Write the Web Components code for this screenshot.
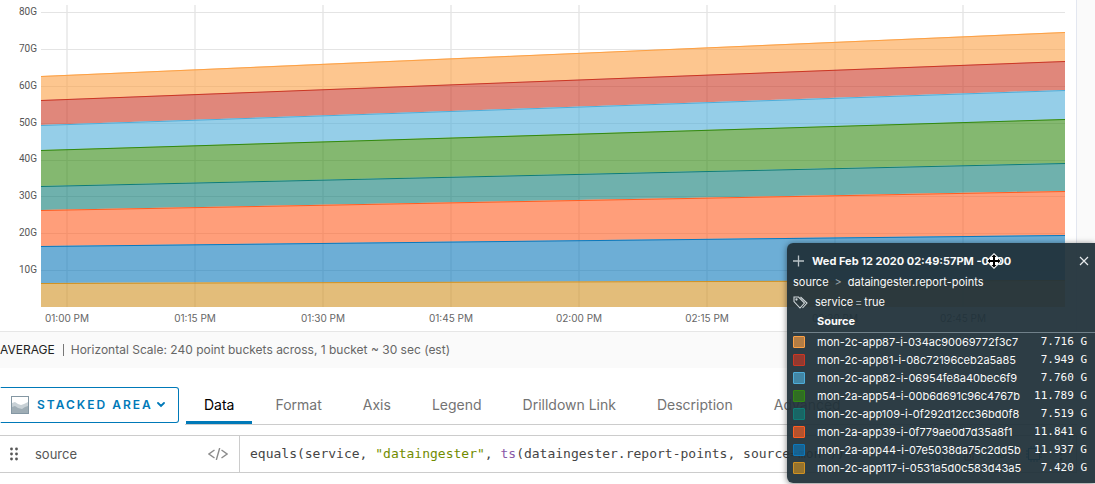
<!DOCTYPE html>
<html lang="en">
<head>
<meta charset="utf-8">
<title>Report points chart</title>
<style>
  body { margin: 0; background: #fff; overflow: hidden; font-family: Inter, "Open Sans", sans-serif; color: #565656; }
</style>
</head>
<body>
<chart-editor></chart-editor>

<template id="t-editor">
  <style>
    :host { display: block; position: relative; padding-bottom: 11px; }
    .top { background: #fafafa; padding-right: 18px; }
    .controls { display: flex; align-items: flex-start; margin: 18px 18px 0 0; }
    hover-legend { position: absolute; top: 243px; right: 0; }
  </style>
  <div class="top"><area-chart></area-chart></div>
  <scale-note><b slot="mode">AVERAGE</b>Horizontal Scale: 240 point buckets across, 1 bucket ~ 30 sec (est)</scale-note>
  <div class="controls">
    <chart-type>STACKED AREA</chart-type>
    <tab-bar></tab-bar>
  </div>
  <query-row></query-row>
  <hover-legend></hover-legend>
</template>

<template id="t-chart">
  <style>
    :host { display: block; background: #fff; border-right: 1px solid #e3e7f0; border-bottom: 1px solid #e6e6e6; }
    .plot { display: grid; grid-template-columns: 41px 1fr; padding-right: 11px; }
    .y { display: flex; flex-direction: column; justify-content: space-between; align-items: flex-end;
         padding: 6px 4px 31px 0; font: 10px/12px Roboto, sans-serif; color: #555; }
    svg { display: block; width: 100%; height: 302px; margin-top: 5px; }
    .x { display: grid; grid-template-columns: repeat(8, 1fr); margin: 0 49px 0 3px; padding: 5px 0 6px;
         font-size: 10px; line-height: 13px; color: #666; text-align: center; }
  </style>
  <div class="plot"><div class="y"></div>
    <svg viewBox="0 0 1024 302" preserveAspectRatio="none" role="img" aria-label="Stacked area chart"></svg></div>
  <div class="x"></div>
</template>

<template id="t-note">
  <style>
    :host { display: flex; align-items: center; height: 36px; background: #fafafa; font-size: 12px; line-height: 16px; color: #666; }
    ::slotted(b) { font-weight: 400; color: #222; }
    i { width: 1px; height: 12px; background: #777; margin: 0 7px 0 8px; }
  </style>
  <slot name="mode"></slot><i></i><span><slot></slot></span>
</template>

<template id="t-type">
  <style>
    :host { display: block; flex: none; }
    button { display: flex; align-items: center; box-sizing: border-box; width: 179px; height: 36px; margin: 1px 0 0;
      padding: 0 13px 0 10px; border: 1px solid #0079b8; border-left-color: #fff; border-radius: 0 3px 3px 0; background: #fff;
      font: 600 12px/16px Inter, sans-serif; letter-spacing: 2px; color: #0079b8; white-space: nowrap; }
    .area { margin-right: 8px; flex: none; }
    .caret { margin-left: auto; flex: none; }
  </style>
  <button type="button" aria-haspopup="listbox">
    <svg class="area" width="18" height="18" viewBox="0 0 18 18"><rect x=".5" y=".5" width="17" height="17" fill="#fff" stroke="#8497a3"/><path d="M1 7l3-1 3 2 3 1 3-1 2-1 2-1v8H1z" fill="#c8d1d6"/><path d="M1 11l3-1 3 2 4 1 3-2 3-1v7H1z" fill="#9fadb5"/></svg>
    <slot></slot>
    <svg class="caret" width="8" height="6" viewBox="0 0 8 6"><path d="M1 1l3 3 3-3" fill="none" stroke="#0079b8" stroke-width="1.8" stroke-linecap="round"/></svg>
  </button>
</template>

<template id="t-tabs">
  <style>
    :host { display: block; flex: 1; margin-left: 6px; min-width: 0; }
    div { display: flex; gap: 5px; box-sizing: border-box; height: 39px; border-bottom: 1px solid #ccc; padding-left: 1px; }
    button { flex: none; box-sizing: border-box; border: 0; border-bottom: 3px solid transparent; background: none; padding: 3px 18px 0;
      font: 14px/18px Inter, sans-serif; color: #737373; }
    button[aria-selected=true] { color: #000; border-bottom-color: #0079b8; }
  </style>
  <div role="tablist"></div>
</template>

<template id="t-query">
  <style>
    :host { display: flex; align-items: stretch; height: 36px; margin: 10px 18px 0 0; border: 1px solid #ccc; border-left: 0; }
    .name { display: flex; align-items: center; box-sizing: border-box; width: 240px; flex: none; padding: 0 11px 0 10px; border-right: 1px solid #ccc; }
    input { flex: 1; min-width: 0; border: 0; padding: 0; margin: 0 0 0 17px; font: 13px/18px Inter, sans-serif; color: #565656; outline: 0; background: none; }
    code { flex: 1; padding-left: 10px; font: 13px/36px "DejaVu Sans Mono", monospace; color: #454545; white-space: pre; min-width: 0; overflow: hidden; }
    .str { color: #718c00; } .fn { color: #8959a8; }
    .tools { flex: none; box-sizing: border-box; width: 159px; border-left: 1px solid #ccc; display: flex; align-items: center; justify-content: space-around; padding: 0 4px; }
  </style>
  <div class="name">
    <svg width="8" height="14" viewBox="0 0 8 14" fill="#565656"><circle cx="1.5" cy="2" r="1.4"/><circle cx="6.5" cy="2" r="1.4"/><circle cx="1.5" cy="7" r="1.4"/><circle cx="6.5" cy="7" r="1.4"/><circle cx="1.5" cy="12" r="1.4"/><circle cx="6.5" cy="12" r="1.4"/></svg>
    <input type="text" value="source" aria-label="Query name">
    <svg width="20" height="12" viewBox="0 0 20 12" fill="none" stroke="#8c8c8c" stroke-width="1.4"><path d="M6.500 2L1 6l5.500 4M13.500 2L19 6l-5.500 4M11.700 0L8.300 12"/></svg>
  </div>
  <code>equals(service, <span class="str">"dataingester"</span>, <span class="fn">ts</span>(dataingester.report-points, source=mon*))</code>
  <div class="tools">
    <svg width="14" height="14" viewBox="0 0 14 14" fill="none" stroke="#0079b8"><path d="M4 3.500h8v10H4zM2 11V1h8"/></svg>
    <svg width="14" height="14" viewBox="0 0 14 14" fill="none" stroke="#c92100"><path d="M1 3.500h12M3 4v9h8V4M5 3V1h4v2M5.500 6v5M8.500 6v5"/></svg>
    <svg width="14" height="14" viewBox="0 0 14 14" fill="none" stroke="#318700"><path d="M1 7q6-7 12 0q-6 7-12 0z"/><circle cx="7" cy="7" r="2"/></svg>
    <svg width="16" height="16" viewBox="0 0 16 16" fill="none" stroke="#0079b8"><rect x="2.500" y="2.500" width="11" height="11"/><path d="M5 0v2M8 0v2M11 0v2M5 14v2M8 14v2M11 14v2M0 5h2M0 8h2M0 11h2M14 5h2M14 8h2M14 11h2"/></svg>
    <svg width="4" height="14" viewBox="0 0 4 14" fill="#565656"><circle cx="2" cy="2" r="1.500"/><circle cx="2" cy="7" r="1.500"/><circle cx="2" cy="12" r="1.500"/></svg>
  </div>
</template>

<template id="t-legend">
  <style>
    :host { display: block; box-sizing: border-box; width: 308px; height: 240px; padding: 8px 0 0 6px; border-radius: 6px 0 0 6px;
      background: rgba(32, 49, 57, .94); box-shadow: 0 1px 6px rgba(0, 0, 0, .5); color: #fafafa; font-size: 11px; line-height: 18px; }
    header { display: flex; align-items: center; height: 20px; margin-bottom: 1px; }
    header svg { display: block; }
    h2 { position: relative; margin: 0 auto 0 8px; font-size: 11px; line-height: 18px; font-weight: 700; white-space: nowrap; }
    .move { position: absolute; right: 9px; top: 1px; }
    .icon { border: 0; background: none; padding: 0; }
    .close { margin-right: 6px; }
    p { display: flex; align-items: center; height: 20px; margin: 0; }
    p span { color: #9aa5ab; }
    .crumb span { margin: 0 6px; }
    .tag svg { margin-right: 7px; }
    .tag span { margin: 0 2px; }
    table { width: 100%; border-collapse: collapse; }
    th { text-align: left; height: 18px; padding: 0 0 2px; line-height: 18px; font-weight: 700; border-bottom: 1px solid #71818a; }
    td { height: 18px; padding: 0; }
    .sw { width: 24px; }
    .sw i { display: block; box-sizing: border-box; width: 12px; height: 12px; border: 1px solid; border-radius: 1px; }
    .v { text-align: right; padding-right: 8px; font: 11px/18px "DejaVu Sans Mono", monospace; white-space: pre; }
  </style>
  <header>
    <button class="icon" type="button" aria-label="Add"><svg width="11" height="12" viewBox="0 0 11 12"><path d="M5.500 .5v11M0 6h11" stroke="#b9c2c7" stroke-width="1.300"/></svg></button>
    <h2>Wed Feb 12 2020 02:49:57PM -0000
      <svg class="move" width="16" height="16" viewBox="0 0 16 16"><path d="M8 0L16 8 8 16 0 8z" fill="#fff"/><path d="M8 1.500l2.500 2.500H9v3h3V5.500L14.500 8 12 10.500V9H9v3h1.500L8 14.500 5.500 12H7V9H4v1.500L1.500 8 4 5.500V7h3V4H5.500z" fill="#000"/></svg></h2>
    <button class="icon close" type="button" aria-label="Close"><svg width="10" height="10" viewBox="0 0 10 10"><path d="M1 1l8 8M9 1L1 9" stroke="#e6eaec" stroke-width="1.200"/></svg></button>
  </header>
  <p class="crumb">source<span>&gt;</span>dataingester.report-points</p>
  <p class="tag"><svg width="15" height="13" viewBox="0 0 15 13" fill="none" stroke="#cfd6d9" stroke-width="1.100"><path d="M1 1h4.500l6 6-4.500 5L1 5.500zM7.500 1L14 7l-4.500 5"/><circle cx="3.500" cy="3.500" r=".6"/></svg>service<span>=</span>true</p>
  <table><thead><tr><th></th><th colspan="2" scope="col">Source</th></tr></thead><tbody></tbody></table>
</template>

<script>
  // Top-down series: colour, legend name, latest value, top edge at the left and right of the plot.
  const SERIES = [
    ['#fca044', 'mon-2c-app87-i-034ac90069772f3c7', '7.716', 71, 27],
    ['#cb3723', 'mon-2c-app81-i-08c72196ceb2a5a85', '7.949', 95, 56],
    ['#4eadd9', 'mon-2c-app82-i-06954fe8a40bec6f9', '7.760', 120, 85],
    ['#328911', 'mon-2a-app54-i-00b6d691c96c4767b', '11.789', 145, 114],
    ['#0f7d76', 'mon-2c-app109-i-0f292d12cc36bd0f8', '7.519', 181, 158],
    ['#ff5d21', 'mon-2a-app39-i-0f779ae0d7d35a8f1', '11.841', 205, 186],
    ['#0c78bb', 'mon-2a-app44-i-07e5038da75c2dd5b', '11.937', 241, 230],
    ['#d09121', 'mon-2c-app117-i-0531a5d0c583d43a5', '7.420', 278, 275]
  ];

  class Part extends HTMLElement {
    connectedCallback() {
      if (this.shadowRoot) return;
      const root = this.attachShadow({ mode: 'open' });
      root.append(document.getElementById(this.constructor.template).content.cloneNode(true));
      this.fill(root);
    }
    fill() {}
  }

  class AreaChart extends Part {
    static template = 't-chart';
    fill(root) {
      root.querySelector('.y').innerHTML = [80, 70, 60, 50, 40, 30, 20, 10].map(n => `<span>${n}G</span>`).join('');
      root.querySelector('.x').innerHTML = ['01:00', '01:15', '01:30', '01:45', '02:00', '02:15', '02:30', '02:45'].map(t => `<span>${t} PM</span>`).join('');
      const v = [0, 1, 2, 3, 4, 5, 6, 7].map(i => `M${26 + i * 128} 0V302`).join('');
      const h = [7, 44, 81, 118, 155, 191, 228, 265].map(y => `M0 ${y + .5}H1024`).join('');
      const areas = SERIES.map(([c, , , l, r], i) => {
        const next = SERIES[i + 1];
        const bl = next ? next[3] : 302, br = next ? next[4] : 302;
        return `<path d="M0 ${l}L1024 ${r}V${br}L0 ${bl}z" fill="${c}" fill-opacity=".6"/>`;
      }).join('');
      const lines = SERIES.map(([c, , , l, r]) =>
        `<path d="M0 ${l}.5L1024 ${r}.5" fill="none" stroke="${c}" vector-effect="non-scaling-stroke"/>`).join('');
      root.querySelector('svg').innerHTML =
        `<path d="${v}" stroke="#ededed" stroke-width="2"/><path d="${h}" stroke="#e4e4e4"/>${areas}${lines}`;
    }
  }

  class TabBar extends Part {
    static template = 't-tabs';
    fill(root) {
      root.querySelector('div').innerHTML = ['Data', 'Format', 'Axis', 'Legend', 'Drilldown Link', 'Description', 'Advanced']
        .map((t, i) => `<button type="button" role="tab" aria-selected="${i === 0}">${t}</button>`).join('');
    }
  }

  class HoverLegend extends Part {
    static template = 't-legend';
    fill(root) {
      root.querySelector('tbody').innerHTML = SERIES.map(([c, name, value]) =>
        `<tr><td class="sw"><i style="border-color:${c};background:${c}a6"></i></td><td>${name}</td><td class="v">${value} G</td></tr>`).join('');
    }
  }

  customElements.define('area-chart', AreaChart);
  customElements.define('scale-note', class extends Part { static template = 't-note'; });
  customElements.define('chart-type', class extends Part { static template = 't-type'; });
  customElements.define('tab-bar', TabBar);
  customElements.define('query-row', class extends Part { static template = 't-query'; });
  customElements.define('hover-legend', HoverLegend);
  customElements.define('chart-editor', class extends Part { static template = 't-editor'; });
</script>
</body>
</html>
